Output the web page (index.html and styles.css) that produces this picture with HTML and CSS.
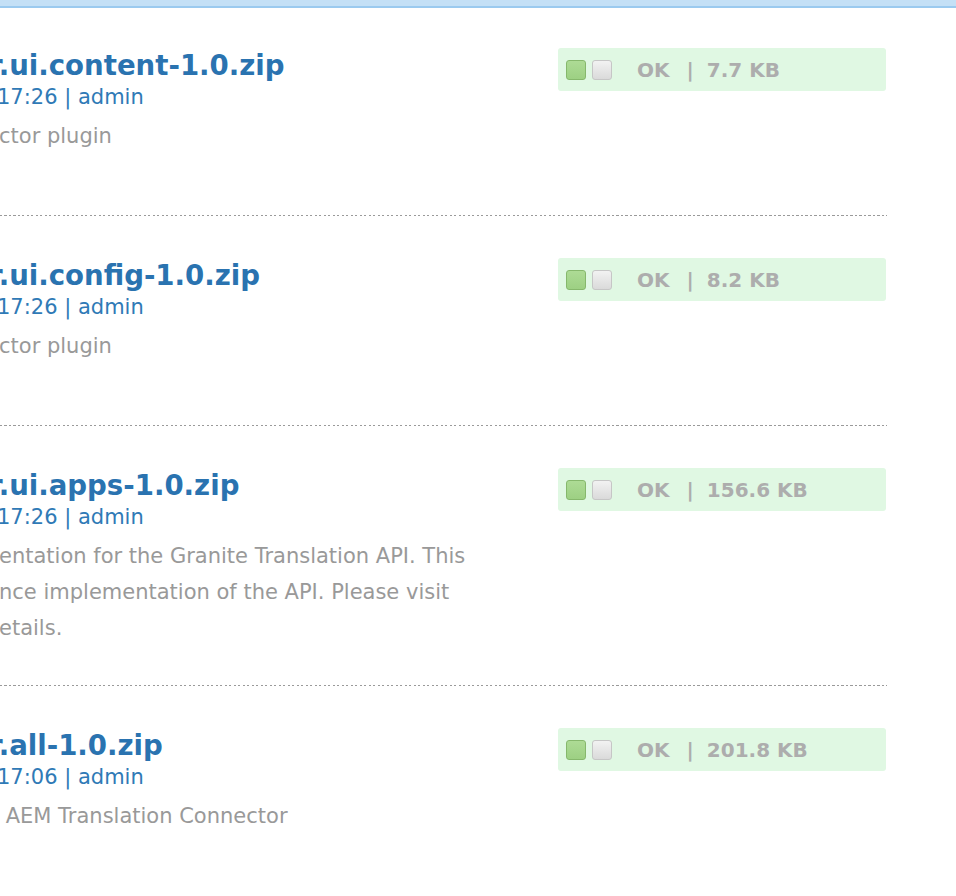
FILE: index.html
```html
<!DOCTYPE html>
<html>
<head>
<meta charset="utf-8">
<link rel="stylesheet" href="styles.css">
</head>
<body>
<div class="topbar"></div>
<ul class="packages">
  <li class="item">
    <div class="main">
      <div class="title">r.ui.content-1.0.zip</div>
      <div class="meta">17:26 | admin</div>
      <div class="desc">ctor plugin</div>
    </div>
    <div class="status">
      <span class="sq sq-green"></span><span class="sq sq-gray"></span>
      <span class="ok">OK</span><span class="sep">|</span><span class="size">7.7 KB</span>
    </div>
  </li>
  <li class="item">
    <div class="main">
      <div class="title">r.ui.config-1.0.zip</div>
      <div class="meta">17:26 | admin</div>
      <div class="desc">ctor plugin</div>
    </div>
    <div class="status">
      <span class="sq sq-green"></span><span class="sq sq-gray"></span>
      <span class="ok">OK</span><span class="sep">|</span><span class="size">8.2 KB</span>
    </div>
  </li>
  <li class="item">
    <div class="main">
      <div class="title">r.ui.apps-1.0.zip</div>
      <div class="meta">17:26 | admin</div>
      <div class="desc">entation for the Granite Translation API. This<br>nce implementation of the API. Please visit<br>etails.</div>
    </div>
    <div class="status">
      <span class="sq sq-green"></span><span class="sq sq-gray"></span>
      <span class="ok">OK</span><span class="sep">|</span><span class="size">156.6 KB</span>
    </div>
  </li>
  <li class="item">
    <div class="main">
      <div class="title">r.all-1.0.zip</div>
      <div class="meta">17:06 | admin</div>
      <div class="desc">&nbsp;AEM Translation Connector</div>
    </div>
    <div class="status">
      <span class="sq sq-green"></span><span class="sq sq-gray"></span>
      <span class="ok">OK</span><span class="sep">|</span><span class="size">201.8 KB</span>
    </div>
  </li>
</ul>
</body>
</html>
```

FILE: styles.css
```css
html, body {
  margin: 0;
  padding: 0;
  background: #ffffff;
  overflow: hidden;
}
body {
  font-family: "DejaVu Sans", Verdana, sans-serif;
  width: 956px;
  height: 896px;
}
.topbar {
  height: 6px;
  background: #c4e0f6;
  border-bottom: 2px solid #9bcaef;
}
.packages {
  list-style: none;
  margin: 0;
  padding: 0;
  width: 887px;
}
.item {
  display: flex;
  align-items: flex-start;
  padding: 41px 0 40px 0;
  background-image: repeating-linear-gradient(90deg, #9a9a9a 0 2px, transparent 2px 4.5px);
  background-size: 100% 1px;
  background-position: left bottom;
  background-repeat: no-repeat;
}
.item:first-child {
  padding-top: 39px;
}
.item:last-child {
  background-image: none;
}
.main {
  width: 558px;
  min-height: 129px;
  overflow: hidden;
}
.title {
  font-size: 27.6px;
  font-weight: bold;
  line-height: 38px;
  color: #2a73b0;
  white-space: nowrap;
  margin-left: -11px;
}
.meta {
  font-size: 21px;
  line-height: 24px;
  color: #2f7ab6;
  white-space: nowrap;
  margin-left: -3px;
}
.desc {
  margin-top: 9px;
  font-size: 21px;
  line-height: 36px;
  color: #999999;
  white-space: nowrap;
  margin-left: -1px;
}
.status {
  margin-top: 1px;
  width: 328px;
  height: 43px;
  box-sizing: border-box;
  padding-left: 8px;
  background: #e0f8e3;
  border-radius: 3px;
  display: flex;
  align-items: center;
  font-size: 20px;
  font-weight: bold;
  color: #adadad;
}
.sq {
  width: 20px;
  height: 20px;
  box-sizing: border-box;
  border-radius: 3px;
  display: block;
  margin-top: 1px;
}
.sq-green {
  background: linear-gradient(#addb95, #9dd083);
  border: 1px solid #86b86c;
}
.sq-gray {
  margin-left: 6px;
  background: linear-gradient(#f2f2f2, #dadada);
  border: 1px solid #c6c6c6;
}
.ok {
  margin-left: 25px;
}
.sep {
  margin: 0 13px 0 17px;
}
```
